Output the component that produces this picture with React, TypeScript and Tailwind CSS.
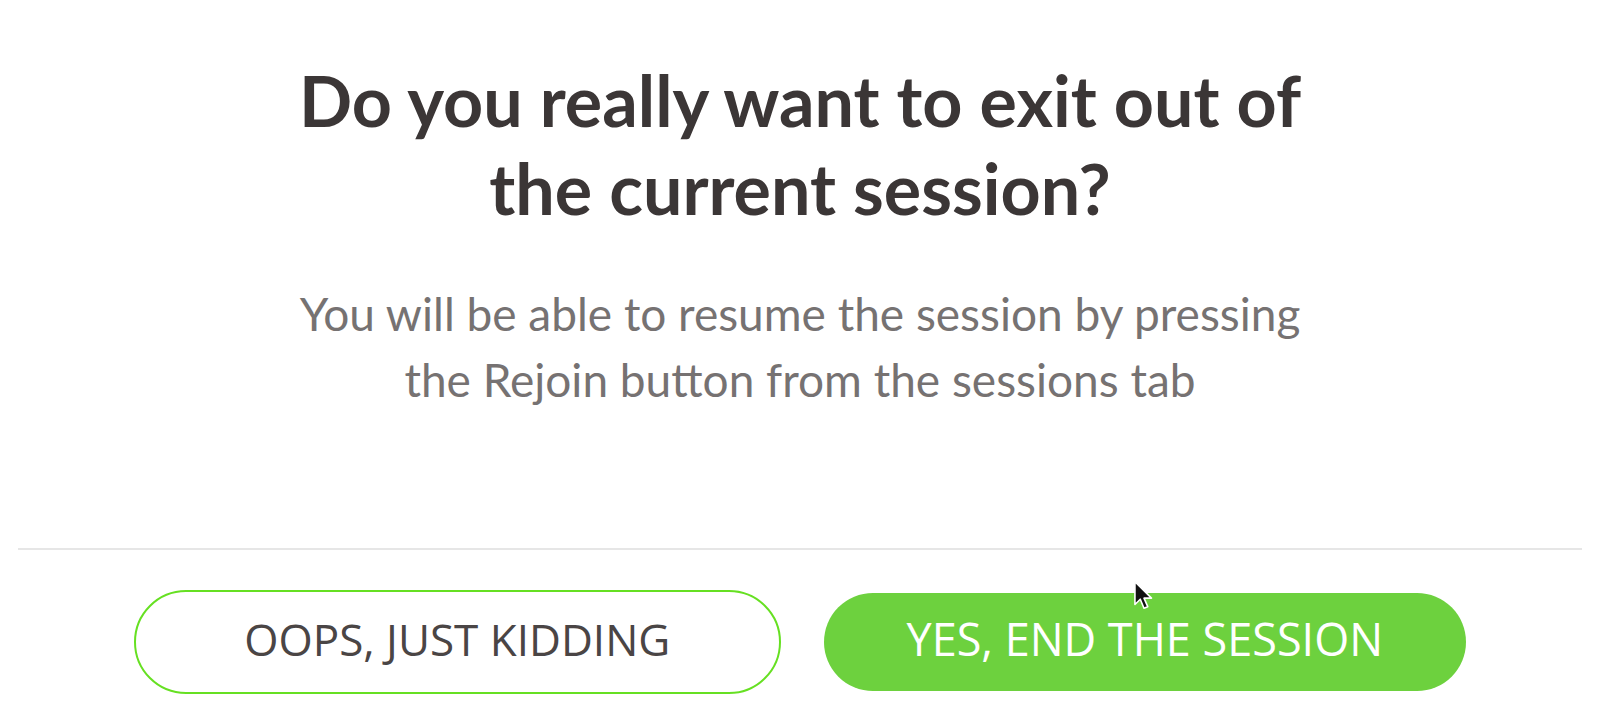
import React from "react";

export default function App() {
  return (
    <div className="relative w-full h-[718px] bg-white flex flex-col items-center overflow-hidden">
      <h1
        className="mt-[56px] text-center text-[70px] leading-[88px] font-bold text-[#3b3636]"
        style={{ fontFamily: "Lato, 'Liberation Sans', sans-serif" }}
      >
        Do you really want to exit out of
        <br />
        the current session?
      </h1>
      <p
        className="mt-[49px] text-center text-[46px] leading-[66px] text-[#767272]"
        style={{ fontFamily: "Lato, 'Liberation Sans', sans-serif" }}
      >
        You will be able to resume the session by pressing
        <br />
        the Rejoin button from the sessions tab
      </p>
      <div className="mt-[135px] self-stretch mx-[18px] h-[2px] bg-[#e6e6e6]" />
      <div className="mt-[40px] self-stretch px-[134px] flex items-center gap-[43px] h-[104px]">
        <button
          className="flex-1 h-[104px] pb-[6px] rounded-full border-[2.5px] border-[#66e022] bg-white flex items-center justify-center text-[44px] font-medium text-[#4a4545]"
          style={{ fontFamily: "'Open Sans', 'Liberation Sans', sans-serif" }}
        >
          OOPS, JUST KIDDING
        </button>
        <button
          className="flex-1 h-[98px] pb-[6px] rounded-full bg-[#6dd13e] flex items-center justify-center text-[45px] font-medium text-white"
          style={{ fontFamily: "'Open Sans', 'Liberation Sans', sans-serif" }}
        >
          YES, END THE SESSION
        </button>
      </div>
      <svg
        className="absolute left-[1133px] top-[580px]"
        width="22"
        height="32"
        viewBox="0 0 20 30"
      >
        <path
          d="M1.5 1.5 L1.5 23 L6.5 18 L10 26.5 L13.5 25 L10 17 L17 17 Z"
          fill="#111"
          stroke="#fff"
          strokeWidth="1.5"
          strokeLinejoin="round"
        />
      </svg>
    </div>
  );
}
